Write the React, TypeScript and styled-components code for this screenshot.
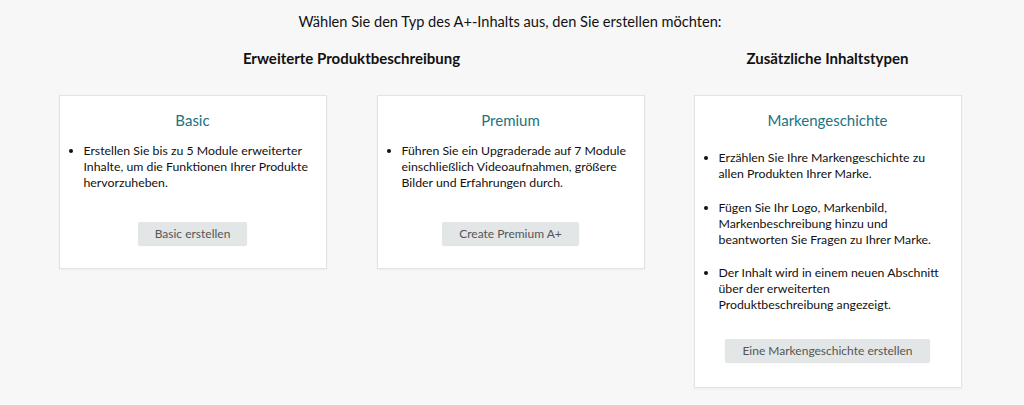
import styled, { createGlobalStyle } from "styled-components";

const GlobalStyle = createGlobalStyle`
  html, body {
    margin: 0;
    padding: 0;
    background: #f7f7f7;
    font-family: Lato, "Liberation Sans", sans-serif;
    color: #111;
  }
`;

interface CardProps {
  title: string;
  // each point is given as its visual lines
  points: string[][];
  button: string;
  spacious?: boolean;
}

function ContentCard(props: CardProps) {
  return (
    <Card $spacious={props.spacious}>
      <CardTitle>{props.title}</CardTitle>
      <BulletList $spacious={props.spacious}>
        {props.points.map((lines, idx) => (
          <li key={idx}>
            {lines.map((line, i) => (
              <Line key={i}>{line}</Line>
            ))}
          </li>
        ))}
      </BulletList>
      <ButtonRow $spacious={props.spacious}>
        <GreyButton>{props.button}</GreyButton>
      </ButtonRow>
    </Card>
  );
}

export default function App() {
  return (
    <>
      <GlobalStyle />
      <Page>
        <PageTitle>Wählen Sie den Typ des A+-Inhalts aus, den Sie erstellen möchten:</PageTitle>
        <Sections>
          <Section>
            <SectionTitle>Erweiterte Produktbeschreibung</SectionTitle>
            <CardRow>
              <ContentCard
                title="Basic"
                points={[
                  [
                    "Erstellen Sie bis zu 5 Module erweiterter",
                    "Inhalte, um die Funktionen Ihrer Produkte",
                    "hervorzuheben.",
                  ],
                ]}
                button="Basic erstellen"
              />
              <ContentCard
                title="Premium"
                points={[
                  [
                    "Führen Sie ein Upgraderade auf 7 Module",
                    "einschließlich Videoaufnahmen, größere",
                    "Bilder und Erfahrungen durch.",
                  ],
                ]}
                button="Create Premium A+"
              />
            </CardRow>
          </Section>
          <Section>
            <SectionTitle>Zusätzliche Inhaltstypen</SectionTitle>
            <CardRow>
              <ContentCard
                spacious
                title="Markengeschichte"
                points={[
                  ["Erzählen Sie Ihre Markengeschichte zu", "allen Produkten Ihrer Marke."],
                  [
                    "Fügen Sie Ihr Logo, Markenbild,",
                    "Markenbeschreibung hinzu und",
                    "beantworten Sie Fragen zu Ihrer Marke.",
                  ],
                  [
                    "Der Inhalt wird in einem neuen Abschnitt",
                    "über der erweiterten",
                    "Produktbeschreibung angezeigt.",
                  ],
                ]}
                button="Eine Markengeschichte erstellen"
              />
            </CardRow>
          </Section>
        </Sections>
      </Page>
    </>
  );
}

const Page = styled.div`
  width: 1024px;
  height: 405px;
  box-sizing: border-box;
  padding: 12px 4px 0 0;
  display: flex;
  flex-direction: column;
  align-items: center;
  overflow: hidden;
`;

const PageTitle = styled.div`
  font-size: 14.6px;
  line-height: 20px;
  color: #111;
`;

const Sections = styled.div`
  margin-top: 16px;
  display: flex;
  gap: 49px;
  align-items: flex-start;
`;

const Section = styled.div`
  display: flex;
  flex-direction: column;
  align-items: center;
`;

const SectionTitle = styled.div`
  font-size: 15px;
  font-weight: 700;
  line-height: 20px;
  color: #111;
  margin-bottom: 27px;
`;

const CardRow = styled.div`
  display: flex;
  gap: 50px;
  align-items: flex-start;
`;

const Card = styled.div<{ $spacious?: boolean }>`
  width: 268px;
  box-sizing: border-box;
  background: #fff;
  border: 1px solid #e3e3e3;
  box-shadow: 0 1px 2px rgba(0, 0, 0, 0.04);
  padding: 14px 4px ${(p) => (p.$spacious ? "25px" : "23px")} 10px;
  display: flex;
  flex-direction: column;
`;

const CardTitle = styled.div`
  text-align: center;
  font-size: 15px;
  line-height: 20px;
  color: #22727f;
  padding-right: 6px;
`;

const BulletList = styled.ul<{ $spacious?: boolean }>`
  margin: ${(p) => (p.$spacious ? "20px" : "13px")} 0 0 0;
  padding-left: 14px;
  font-size: 12.3px;
  line-height: 16px;
  color: #111;
  display: flex;
  flex-direction: column;
  gap: 17.5px;
`;

const Line = styled.span`
  display: block;
  white-space: nowrap;
`;

const ButtonRow = styled.div<{ $spacious?: boolean }>`
  margin-top: ${(p) => (p.$spacious ? "26px" : "31px")};
  display: flex;
  justify-content: center;
  padding-right: 6px;
`;

const GreyButton = styled.button`
  height: 23px;
  padding: 0 17px;
  border: none;
  border-radius: 2px;
  background: #e2e6e7;
  box-shadow: 0 1px 1px rgba(0, 0, 0, 0.12);
  color: #555;
  font-family: inherit;
  font-size: 12px;
  cursor: pointer;
`;
